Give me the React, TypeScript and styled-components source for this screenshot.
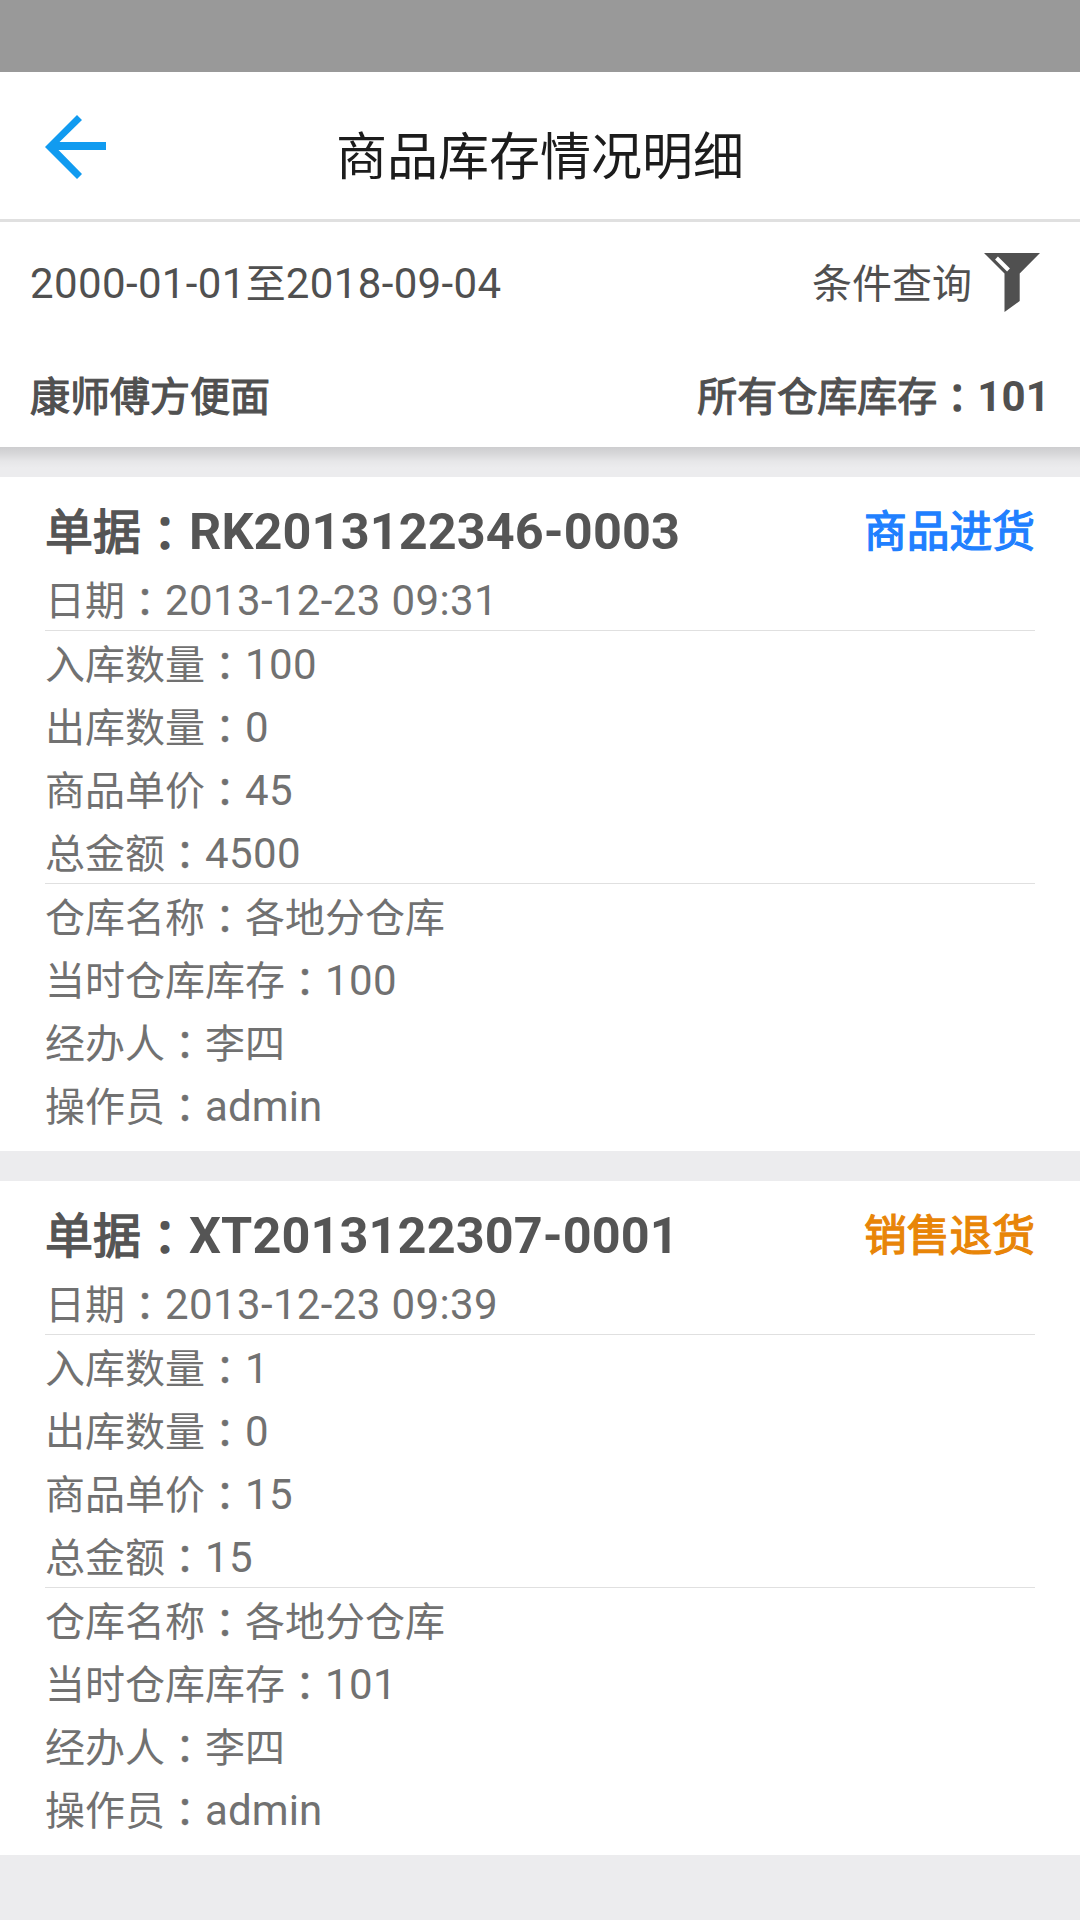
import React from "react";
import styled, { createGlobalStyle } from "styled-components";

const Global = createGlobalStyle`
  * { box-sizing: border-box; }
  body { margin: 0; background: #ececee; font-family: Roboto, "Noto Sans CJK SC", sans-serif; color: #717171; }
`;
const Screen = styled.div`
  width: 1080px;
  height: 1920px;
  overflow: hidden;
  background: #ececee;
`;
const StatusBar = styled.div`
  height: 72px;
  background: #999;
`;
const Header = styled.header`
  height: 150px;
  background: #fff;
  border-bottom: 3px solid #e0e0e0;
  display: grid;
  grid-template-columns: 150px 1fr 150px;
  align-items: start;
`;
const Back = styled.button`
  display: flex;
  margin: 43px 0 0 45px;
  padding: 0;
  border: 0;
  background: none;
`;
const Title = styled.h1`
  margin: 56px 0 0;
  font-weight: 400;
  font-size: 51px;
  line-height: 60px;
  color: #1c1c1c;
  text-align: center;
`;
const Summary = styled.section`
  height: 225px;
  background: #fff;
  padding: 0 30px;
  color: #505050;
  font-size: 40px;
`;
const Line = styled.div<{ $height: number; $lineHeight: number }>`
  display: flex;
  justify-content: space-between;
  align-items: flex-start;
  height: ${p => p.$height}px;
  line-height: ${p => p.$lineHeight}px;
  white-space: nowrap;
`;
const Filter = styled.div`
  display: flex;
  align-items: flex-start;
  gap: 12px;
  padding-right: 10px;
`;
const FunnelIcon = styled.svg`
  display: block;
  margin-top: 31px;
`;
const Shade = styled.div`
  height: 30px;
  background: linear-gradient(#cdcdcf 0, #d8d8da 7px, #e6e6e8 14px, #ececee 21px);
`;
const List = styled.main`
  display: flex;
  flex-direction: column;
  gap: 30px;
`;
const Card = styled.article`
  background: #fff;
  height: 674px;
  padding: 18px 45px 0;
`;
const CardHead = styled.div`
  display: flex;
  justify-content: space-between;
  align-items: flex-start;
  height: 72px;
  line-height: 75px;
  white-space: nowrap;
`;
const Doc = styled.span`
  font-size: 48px;
  color: #555;
`;
const Kind = styled.span<{ $color: string }>`
  font-size: 42.750px;
  color: ${p => p.$color};
`;
const Group = styled.div<{ $rule?: boolean }>`
  border-bottom: ${p => (p.$rule ? "1px solid #e0e0e0" : "0")};
`;
const Row = styled.div`
  height: 63px;
  line-height: 69px;
  font-size: 40px;
  white-space: nowrap;
`;

const Han = styled.span<{ $bold?: boolean }>`
  -webkit-text-stroke: ${p => (p.$bold ? "0.03em currentColor" : "0")};
`;
const Colon = styled.span<{ $bold?: boolean }>`
  line-height: 0;
  font-family: "Noto Sans CJK TC", sans-serif;
  vertical-align: -0.045em;
  -webkit-text-stroke: ${p => (p.$bold ? "0.035em" : "0.008em")} currentColor;
`;
const Latin = styled.span<{ $bold?: boolean; $spacing: number }>`
  font-size: 1.05em;
  line-height: 0;
  font-weight: ${p => (p.$bold ? 700 : 400)};
  letter-spacing: ${p => p.$spacing}px;
  font-kerning: none;
`;

/* Latin runs are set slightly larger than the Chinese text beside them. */
function Mixed({ text, bold }: { text: string; bold?: boolean }) {
  const runs = text.match(/：|[a-zA-Z]+|[\d\-: ]+|[^：\x00-\x7f]+/g) ?? [];
  return (
    <span>
      {runs.map((run, i) => {
        if (run === "：") return <Colon key={i} $bold={bold} lang="zh-TW">{run}</Colon>;
        if (/^[a-zA-Z]/.test(run)) return <Latin key={i} $bold={bold} $spacing={0.1}>{run}</Latin>;
        if (/^[\d\-: ]/.test(run)) return <Latin key={i} $bold={bold} $spacing={bold ? 0.12 : 0.37}>{run}</Latin>;
        return <Han key={i} $bold={bold}>{run}</Han>;
      })}
    </span>
  );
}

const records = [
  {
    no: "RK2013122346-0003", kind: "商品进货", color: "#207fff",
    groups: [
      ["日期：2013-12-23 09:31"],
      ["入库数量：100", "出库数量：0", "商品单价：45", "总金额：4500"],
      ["仓库名称：各地分仓库", "当时仓库库存：100", "经办人：李四", "操作员：admin"],
    ],
  },
  {
    no: "XT2013122307-0001", kind: "销售退货", color: "#e88508",
    groups: [
      ["日期：2013-12-23 09:39"],
      ["入库数量：1", "出库数量：0", "商品单价：15", "总金额：15"],
      ["仓库名称：各地分仓库", "当时仓库库存：101", "经办人：李四", "操作员：admin"],
    ],
  },
];

export default function App() {
  return (
    <Screen>
      <Global />
      <StatusBar />
      <Header>
        <Back aria-label="返回">
          <svg width="61" height="64" viewBox="0 0 61 64">
            <path fill="#119bf0" d="M0 32 32 0l5 5-22.500 22H61v8H13.500L37 59l-5 5z" />
          </svg>
        </Back>
        <Title>商品库存情况明细</Title>
      </Header>
      <Summary>
        <Line $height={125} $lineHeight={125}>
          <Mixed text="2000-01-01至2018-09-04" />
          <Filter>
            <span>条件查询</span>
            <FunnelIcon width="56" height="59" viewBox="0 0 56 59">
              <path fill="#505050" d="M0 0h56L35.700 20.500V48L20.500 59V20.500z" />
              <path stroke="#fff" strokeWidth="4" d="M12.500 5 24.500 17" />
            </FunnelIcon>
          </Filter>
        </Line>
        <Line $height={100} $lineHeight={101}>
          <Mixed bold text="康师傅方便面" />
          <Mixed bold text="所有仓库库存：101" />
        </Line>
      </Summary>
      <Shade />
      <List>
        {records.map(r => (
          <Card key={r.no}>
            <CardHead>
              <Doc><Mixed bold text={`单据：${r.no}`} /></Doc>
              <Kind $color={r.color}><Mixed bold text={r.kind} /></Kind>
            </CardHead>
            {r.groups.map((g, i) => (
              <Group key={i} $rule={i < 2}>
                {g.map(t => <Row key={t}><Mixed text={t} /></Row>)}
              </Group>
            ))}
          </Card>
        ))}
      </List>
    </Screen>
  );
}
